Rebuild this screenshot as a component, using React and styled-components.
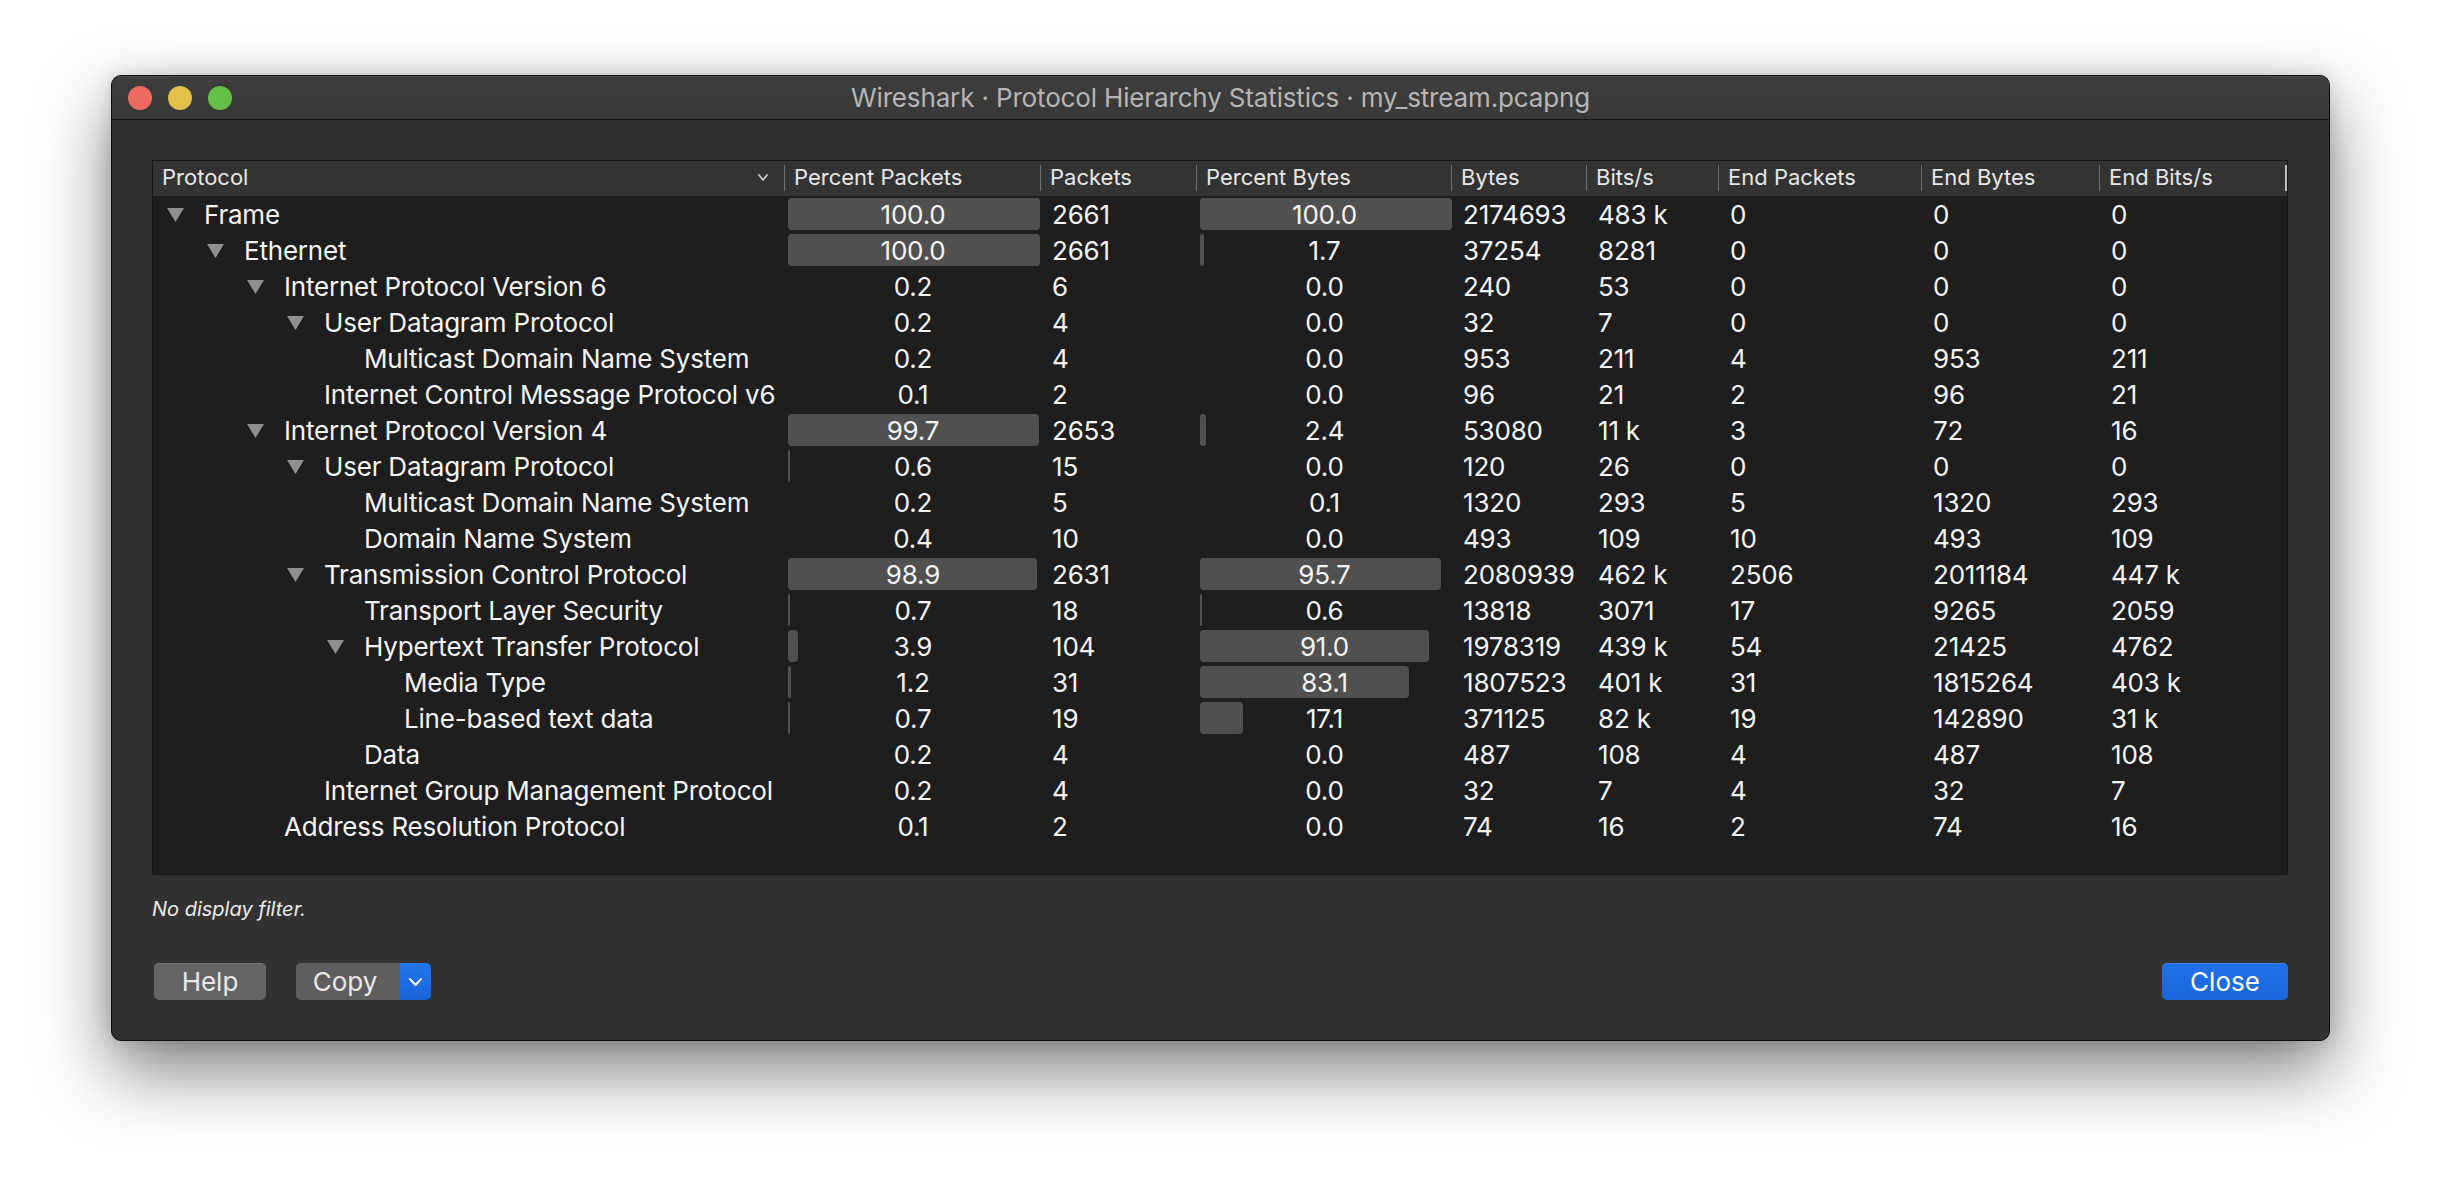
import React from 'react'
import styled, { createGlobalStyle } from 'styled-components'

const GlobalStyle = createGlobalStyle`
    html, body {
        margin: 0;
        padding: 0;
        background: #ffffff;
    }
    body {
        font-family: "Inter", "Liberation Sans", sans-serif;
        -webkit-font-smoothing: antialiased;
    }
`

const COLS = [632, 256, 156, 255, 135, 132, 203, 178, 187]
const GRID = COLS.map(w => w + 'px').join(' ')
const HEADERS = ['Protocol', 'Percent Packets', 'Packets', 'Percent Bytes', 'Bytes', 'Bits/s', 'End Packets', 'End Bytes', 'End Bits/s']

// name, level, expandable, pctPackets, packets, pctBytes, bytes, bits, endPackets, endBytes, endBits
const ROWS = [
    ['Frame', 0, true, 100.0, 2661, 100.0, 2174693, '483 k', 0, 0, 0],
    ['Ethernet', 1, true, 100.0, 2661, 1.7, 37254, '8281', 0, 0, 0],
    ['Internet Protocol Version 6', 2, true, 0.2, 6, 0.0, 240, '53', 0, 0, 0],
    ['User Datagram Protocol', 3, true, 0.2, 4, 0.0, 32, '7', 0, 0, 0],
    ['Multicast Domain Name System', 4, false, 0.2, 4, 0.0, 953, '211', 4, 953, '211'],
    ['Internet Control Message Protocol v6', 3, false, 0.1, 2, 0.0, 96, '21', 2, 96, '21'],
    ['Internet Protocol Version 4', 2, true, 99.7, 2653, 2.4, 53080, '11 k', 3, 72, '16'],
    ['User Datagram Protocol', 3, true, 0.6, 15, 0.0, 120, '26', 0, 0, 0],
    ['Multicast Domain Name System', 4, false, 0.2, 5, 0.1, 1320, '293', 5, 1320, '293'],
    ['Domain Name System', 4, false, 0.4, 10, 0.0, 493, '109', 10, 493, '109'],
    ['Transmission Control Protocol', 3, true, 98.9, 2631, 95.7, 2080939, '462 k', 2506, 2011184, '447 k'],
    ['Transport Layer Security', 4, false, 0.7, 18, 0.6, 13818, '3071', 17, 9265, '2059'],
    ['Hypertext Transfer Protocol', 4, true, 3.9, 104, 91.0, 1978319, '439 k', 54, 21425, '4762'],
    ['Media Type', 5, false, 1.2, 31, 83.1, 1807523, '401 k', 31, 1815264, '403 k'],
    ['Line-based text data', 5, false, 0.7, 19, 17.1, 371125, '82 k', 19, 142890, '31 k'],
    ['Data', 4, false, 0.2, 4, 0.0, 487, '108', 4, 487, '108'],
    ['Internet Group Management Protocol', 3, false, 0.2, 4, 0.0, 32, '7', 4, 32, '7'],
    ['Address Resolution Protocol', 2, false, 0.1, 2, 0.0, 74, '16', 2, 74, '16'],
]

const Triangle = () => (
    <svg width="17" height="14" viewBox="0 0 17 14">
        <path d="M0 0 H17 L8.5 14 Z" fill="#8f8f8f" />
    </svg>
)

const Chevron = ({ color = '#d0d0d0', w = 10, h = 6, sw = 1.6 }) => (
    <svg width={w} height={h} viewBox={`0 0 ${w} ${h}`}>
        <path d={`M1 1 L${w / 2} ${h - 1} L${w - 1} 1`} fill="none" stroke={color} strokeWidth={sw} strokeLinecap="round" strokeLinejoin="round" />
    </svg>
)

const PercentCell = ({ value }) => {
    const barWidth = value >= 0.5 ? (value * 252) / 100 : 0
    return (
        <BarCell>
            {barWidth > 0 && <Bar style={{ width: barWidth + 'px' }} />}
            <BarText>{value.toFixed(1)}</BarText>
        </BarCell>
    )
}

const App = () => {
    return (
        <>
            <GlobalStyle />
            <Page>
                <Window>
                    <TitleBar>
                        <Lights>
                            <Light color="#ed6a5e" />
                            <Light color="#e1c14c" />
                            <Light color="#66bf48" />
                        </Lights>
                        <Title>Wireshark · Protocol Hierarchy Statistics · my_stream.pcapng</Title>
                        <div />
                    </TitleBar>
                    <Body>
                        <Table>
                            <HeaderRow>
                                {HEADERS.map((h, i) => (
                                    <HeaderCell key={h} last={i === HEADERS.length - 1}>
                                        <span>{h}</span>
                                        {i === 0 && <Chevron color="#cfcfcf" w={10} h={7} sw={1.7} />}
                                    </HeaderCell>
                                ))}
                            </HeaderRow>
                            {ROWS.map((r, idx) => {
                                const [name, level, exp, pp, packets, pb, bytes, bits, ep, eb, ebits] = r
                                return (
                                    <Row key={idx}>
                                        <NameCell level={level}>
                                            <Toggle>{exp && <Triangle />}</Toggle>
                                            <span>{name}</span>
                                        </NameCell>
                                        <PercentCell value={pp} />
                                        <Cell>{packets}</Cell>
                                        <PercentCell value={pb} />
                                        <Cell>{bytes}</Cell>
                                        <Cell>{bits}</Cell>
                                        <Cell>{ep}</Cell>
                                        <Cell>{eb}</Cell>
                                        <Cell>{ebits}</Cell>
                                    </Row>
                                )
                            })}
                            <Filler />
                        </Table>
                        <FilterNote>No display filter.</FilterNote>
                        <ButtonRow>
                            <GreyButton>Help</GreyButton>
                            <SplitButton>
                                <SplitLabel>Copy</SplitLabel>
                                <SplitArrow><Chevron color="#ffffff" w={13} h={8} sw={2} /></SplitArrow>
                            </SplitButton>
                            <Spacer />
                            <BlueButton>Close</BlueButton>
                        </ButtonRow>
                    </Body>
                </Window>
            </Page>
        </>
    )
}

export default App

const Page = styled.div`
    padding: 75px 0 0 111px;
    height: 1188px;
    box-sizing: border-box;
`

const Window = styled.div`
    width: 2219px;
    height: 966px;
    box-sizing: border-box;
    background: #323232;
    border: 1px solid #0e0e0e;
    border-radius: 10px;
    overflow: hidden;
    box-shadow: 0 30px 70px rgba(0, 0, 0, 0.5), 0 0 20px rgba(0, 0, 0, 0.15);
    display: flex;
    flex-direction: column;
`

const TitleBar = styled.div`
    height: 43px;
    flex: none;
    display: grid;
    grid-template-columns: 1fr auto 1fr;
    align-items: center;
    background: linear-gradient(#3e3e3e, #383838);
    border-bottom: 1px solid #151515;
    box-shadow: inset 0 1px 0 rgba(255, 255, 255, 0.1);
`

const Lights = styled.div`
    display: flex;
    gap: 16px;
    padding-left: 16px;
`

const Light = styled.div`
    width: 24px;
    height: 24px;
    border-radius: 50%;
    background: ${p => p.color};
`

const Title = styled.div`
    font-size: 26px;
    letter-spacing: -0.15px;
    color: #b5b5b5;
    white-space: nowrap;
`

const Body = styled.div`
    flex: 1;
    padding: 40px 41px 0 40px;
    display: flex;
    flex-direction: column;
`

const Table = styled.div`
    border: 1px solid #161616;
    background: #1e1e1e;
    display: flex;
    flex-direction: column;
`

const HeaderRow = styled.div`
    display: grid;
    grid-template-columns: ${GRID};
    height: 35px;
    background: #333333;
`

const HeaderCell = styled.div`
    position: relative;
    display: flex;
    align-items: center;
    justify-content: space-between;
    padding: 0 17px 3px 9px;
    box-sizing: border-box;
    font-size: 22px;
    color: #e6e6e6;
    white-space: nowrap;
    &::after {
        content: '';
        position: absolute;
        right: 0;
        top: 4px;
        bottom: 5px;
        width: ${p => (p.last ? '2px' : '1px')};
        background: ${p => (p.last ? '#bdbdbd' : '#6e6e6e')};
    }
`

const Row = styled.div`
    display: grid;
    grid-template-columns: ${GRID};
    height: 36px;
    font-size: 26px;
    letter-spacing: -0.2px;
    color: #f4f4f4;
    white-space: nowrap;
`

const NameCell = styled.div`
    display: flex;
    align-items: center;
    padding-left: ${p => 14 + p.level * 40}px;
`

const Toggle = styled.div`
    width: 37px;
    flex: none;
    display: flex;
    align-items: center;
    padding-top: 1px;
`

const Cell = styled.div`
    display: flex;
    align-items: center;
    padding-left: 11px;
`

const BarCell = styled.div`
    position: relative;
    display: flex;
    align-items: center;
    justify-content: center;
`

const Bar = styled.div`
    position: absolute;
    left: 3px;
    top: 2px;
    bottom: 2px;
    border-radius: 4px;
    background: #505050;
`

const BarText = styled.span`
    position: relative;
`

const Filler = styled.div`
    height: 30px;
`

const FilterNote = styled.div`
    margin-top: 22px;
    height: 24px;
    line-height: 24px;
    font-size: 20px;
    font-style: italic;
    color: #ececec;
`

const ButtonRow = styled.div`
    margin-top: 42px;
    display: flex;
    align-items: center;
    gap: 30px;
    padding-left: 2px;
`

const GreyButton = styled.div`
    width: 112px;
    height: 37px;
    box-sizing: border-box;
    border-radius: 5px;
    background: #646464;
    box-shadow: inset 0 1px 0 rgba(255, 255, 255, 0.12);
    display: flex;
    align-items: center;
    justify-content: center;
    font-size: 26px;
    color: #e8e8e8;
`

const SplitButton = styled.div`
    display: flex;
    height: 37px;
    border-radius: 5px;
    overflow: hidden;
    box-shadow: inset 0 1px 0 rgba(255, 255, 255, 0.12);
`

const SplitLabel = styled.div`
    width: 104px;
    box-sizing: border-box;
    padding-right: 6px;
    background: #5e5e5e;
    display: flex;
    align-items: center;
    justify-content: center;
    font-size: 26px;
    color: #e8e8e8;
`

const SplitArrow = styled.div`
    width: 31px;
    background: linear-gradient(#2276ea, #1865d8);
    display: flex;
    align-items: center;
    justify-content: center;
`

const Spacer = styled.div`
    flex: 1;
`

const BlueButton = styled.div`
    width: 126px;
    height: 37px;
    border-radius: 5px;
    background: linear-gradient(#1f70e8, #1a66dc);
    box-shadow: inset 0 1px 0 rgba(255, 255, 255, 0.15);
    display: flex;
    align-items: center;
    justify-content: center;
    font-size: 26px;
    color: #ffffff;
`
